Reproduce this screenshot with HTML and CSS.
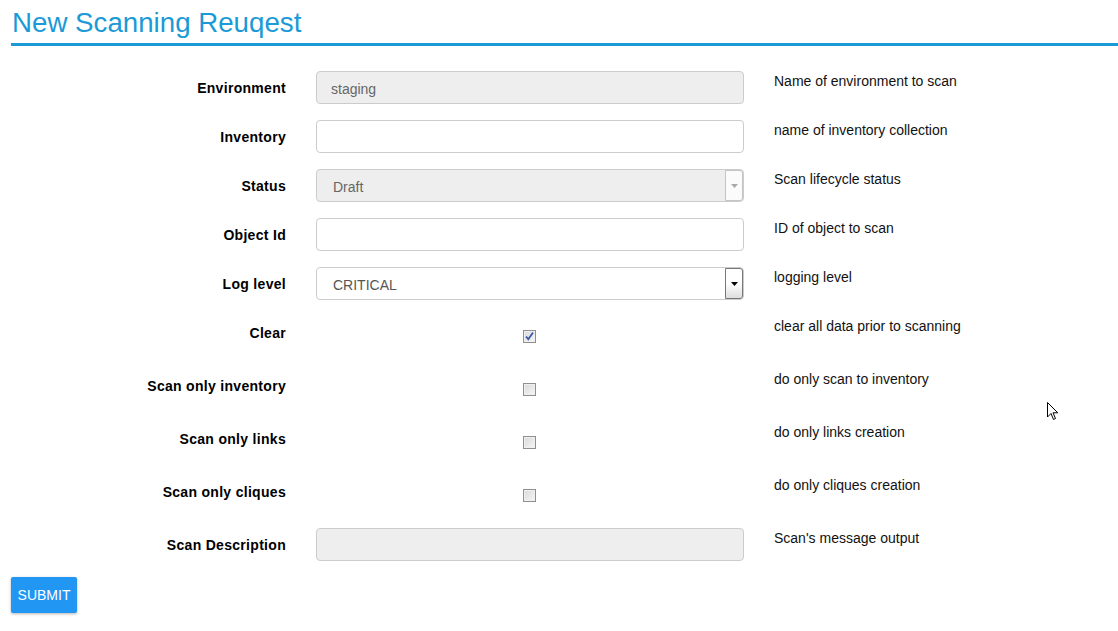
FILE: index.html
```html
<!DOCTYPE html>
<html>
<head>
<meta charset="utf-8">
<link rel="stylesheet" href="styles.css">
</head>
<body>
<div class="page">
  <h1 class="title">New Scanning Reuqest</h1>
  <form class="form">
    <div class="row">
      <label class="label">Environment</label>
      <div class="field"><div class="input disabled">staging</div></div>
      <div class="help">Name of environment to scan</div>
    </div>
    <div class="row">
      <label class="label">Inventory</label>
      <div class="field"><div class="input"></div></div>
      <div class="help">name of inventory collection</div>
    </div>
    <div class="row">
      <label class="label">Status</label>
      <div class="field">
        <div class="input select disabled"><span class="sel-text">Draft</span>
          <span class="arrow-box arrow-disabled"><svg width="7" height="4" viewBox="0 0 7 4"><path d="M0 0h7L3.5 4z" fill="#a8a8a8"/></svg></span>
        </div>
      </div>
      <div class="help">Scan lifecycle status</div>
    </div>
    <div class="row">
      <label class="label">Object Id</label>
      <div class="field"><div class="input"></div></div>
      <div class="help">ID of object to scan</div>
    </div>
    <div class="row">
      <label class="label">Log level</label>
      <div class="field">
        <div class="input select"><span class="sel-text">CRITICAL</span>
          <span class="arrow-box"><svg width="7" height="4" viewBox="0 0 7 4"><path d="M0 0h7L3.5 4z" fill="#000"/></svg></span>
        </div>
      </div>
      <div class="help">logging level</div>
    </div>
    <div class="row check-row">
      <label class="label">Clear</label>
      <div class="field check-field"><span class="checkbox"><svg width="11" height="11" viewBox="0 0 11 11"><path d="M2 5.5 L4.3 8.2 L9 1.5" stroke="#3b5aa8" stroke-width="1.8" fill="none"/></svg></span></div>
      <div class="help">clear all data prior to scanning</div>
    </div>
    <div class="row check-row">
      <label class="label">Scan only inventory</label>
      <div class="field check-field"><span class="checkbox"></span></div>
      <div class="help">do only scan to inventory</div>
    </div>
    <div class="row check-row">
      <label class="label">Scan only links</label>
      <div class="field check-field"><span class="checkbox"></span></div>
      <div class="help">do only links creation</div>
    </div>
    <div class="row check-row">
      <label class="label">Scan only cliques</label>
      <div class="field check-field"><span class="checkbox"></span></div>
      <div class="help">do only cliques creation</div>
    </div>
    <div class="row">
      <label class="label">Scan Description</label>
      <div class="field"><div class="input disabled"></div></div>
      <div class="help">Scan's message output</div>
    </div>
    <div class="actions">
      <button type="button" class="submit">SUBMIT</button>
    </div>
  </form>
  <svg class="cursor" width="12" height="19" viewBox="0 0 12 19"><path d="M0.5 0.5 L0.5 15 L4 11.5 L6.5 17.5 L8.5 16.5 L6 10.8 L10.8 10.8 Z" fill="#fff" stroke="#000" stroke-width="1"/></svg>
</div>
</body>
</html>
```
FILE: styles.css
```css
* { box-sizing: border-box; }
html, body { margin: 0; padding: 0; background: #fff; }
body {
  font-family: "Liberation Sans", Arial, sans-serif;
  font-size: 14px;
  color: #000;
}
.page {
  position: relative;
  width: 1118px;
  height: 631px;
  padding-left: 11px;
}
.title {
  margin: 0;
  padding: 7px 0 4px 1px;
  font-size: 27.7px;
  line-height: 32px;
  font-weight: normal;
  color: #1a9ad6;
  border-bottom: 3px solid #1a9ad6;
}
.form {
  margin-top: 25px;
}
.row {
  display: grid;
  grid-template-columns: 275px 428px 1fr;
  column-gap: 30px;
  height: 49px;
  align-items: start;
}
.check-row { height: 53px; }
.label {
  text-align: right;
  font-weight: bold;
  letter-spacing: 0.3px;
  line-height: 20px;
  padding-top: 7px;
}
.help {
  line-height: 20px;
  color: #111;
}
.input {
  height: 33px;
  border: 1px solid #ccc;
  border-radius: 4px;
  background: #fff;
  color: #555;
  line-height: 32px;
  padding: 1px 14px 0;
}
.input.disabled { background: #eee; color: #666; }
.select {
  position: relative;
  padding-left: 16px;
}
.arrow-box {
  position: absolute;
  right: 0;
  top: 0;
  width: 18px;
  height: 31px;
  border: 1px solid #777;
  border-radius: 0 3px 3px 0;
  background: linear-gradient(#fff, #fff 50%, #ddd);
  display: flex;
  align-items: center;
  justify-content: center;
}
.arrow-box.arrow-disabled {
  border-color: #c4c4c4;
  background: #fbfbfb;
}
.check-field {
  display: flex;
  justify-content: center;
  padding-top: 14px;
  padding-right: 1px;
}
.checkbox {
  width: 13px;
  height: 13px;
  border: 1px solid #8f8f8f;
  background: linear-gradient(135deg, #d9d9d9, #f6f6f6);
  box-shadow: inset 0 0 0 1px #f0f0f0;
  display: flex;
  align-items: center;
  justify-content: center;
}
.submit {
  height: 36px;
  width: 66px;
  border: none;
  border-radius: 2px;
  background: #2196f3;
  color: #fff;
  font-family: "Liberation Sans", Arial, sans-serif;
  font-size: 14px;
  padding: 0;
  box-shadow: 0 1px 3px rgba(0,0,0,0.3);
}
.cursor {
  position: absolute;
  left: 1047px;
  top: 402px;
}
```
